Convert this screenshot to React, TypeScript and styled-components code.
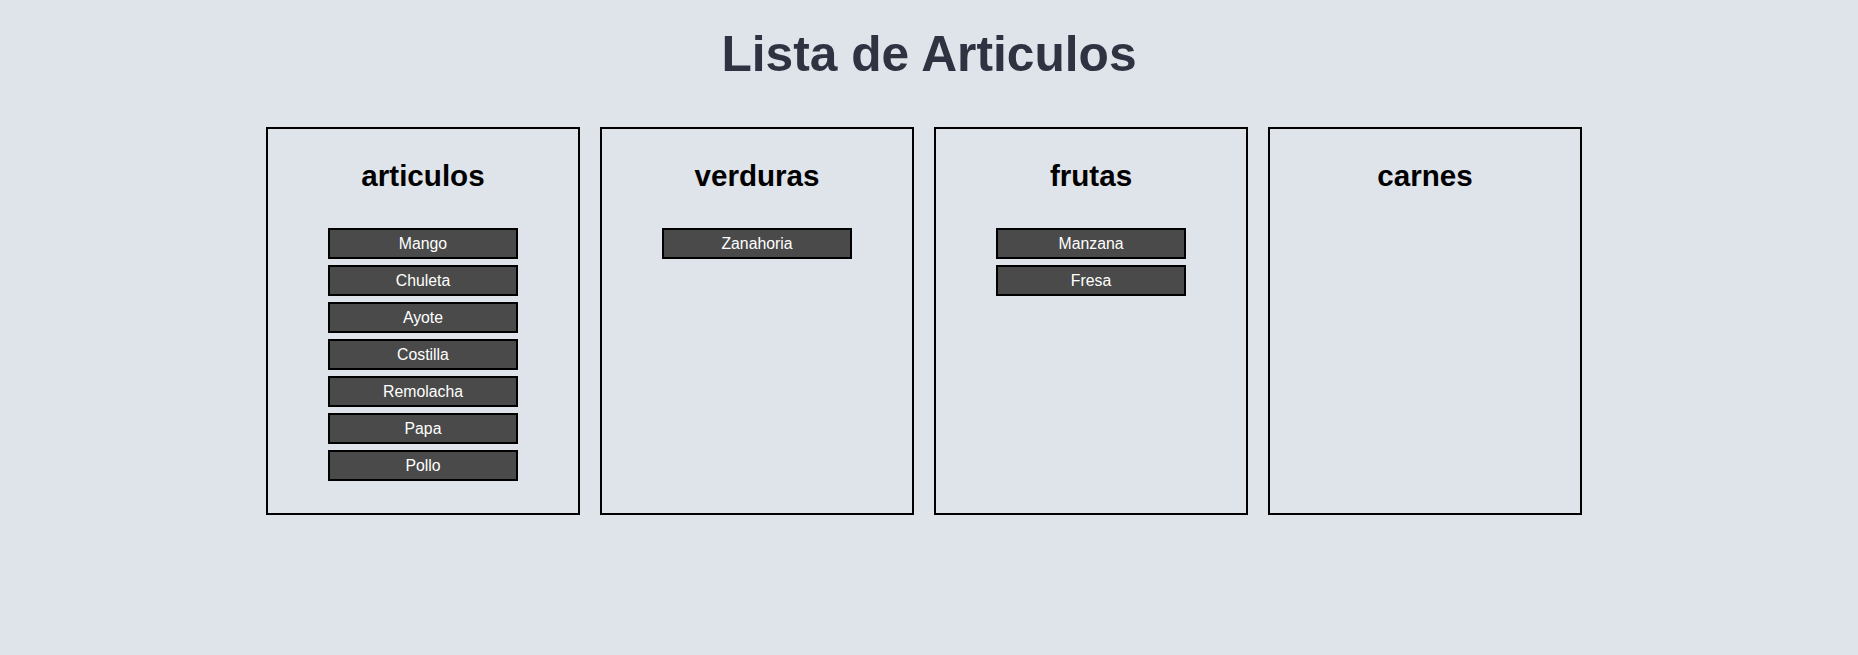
import React from "react";
import styled, { createGlobalStyle } from "styled-components";

const GlobalStyle = createGlobalStyle`
  html, body {
    margin: 0;
    padding: 0;
    background: #dfe3ea;
    font-family: "Liberation Sans", Arial, sans-serif;
  }
`;

const Page = styled.main`
  min-height: 655px;
  background: #dfe3ea;
  padding-top: 26px;
  box-sizing: border-box;
`;

const Title = styled.h1`
  margin: 0 0 45px;
  text-align: center;
  font-size: 49.7px;
  line-height: 56px;
  font-weight: 700;
  color: #2e3241;
`;

const Board = styled.section`
  display: flex;
  justify-content: center;
  align-items: stretch;
  gap: 20px;
  padding-right: 10px;
`;

const Column = styled.div`
  width: 314px;
  box-sizing: border-box;
  border: 2px solid #000;
  padding: 0 0 32px;
  display: flex;
  flex-direction: column;
  align-items: center;
`;

const ColumnTitle = styled.h2`
  margin: 30px 0 35px;
  font-size: 29.6px;
  line-height: 34px;
  font-weight: 700;
  color: #000;
`;

const ItemList = styled.div`
  display: flex;
  flex-direction: column;
  gap: 6px;
`;

const Item = styled.div`
  width: 190px;
  height: 31px;
  box-sizing: border-box;
  border: 2px solid #000;
  background: #4a4a4a;
  color: #fff;
  font-size: 15.8px;
  display: flex;
  align-items: center;
  justify-content: center;
`;

const columns: { name: string; items: string[] }[] = [
  {
    name: "articulos",
    items: ["Mango", "Chuleta", "Ayote", "Costilla", "Remolacha", "Papa", "Pollo"],
  },
  { name: "verduras", items: ["Zanahoria"] },
  { name: "frutas", items: ["Manzana", "Fresa"] },
  { name: "carnes", items: [] },
];

export default function App() {
  return (
    <>
      <GlobalStyle />
      <Page>
        <Title>Lista de Articulos</Title>
        <Board>
          {columns.map((c) => (
            <Column key={c.name}>
              <ColumnTitle>{c.name}</ColumnTitle>
              <ItemList>
                {c.items.map((it) => (
                  <Item key={it}>{it}</Item>
                ))}
              </ItemList>
            </Column>
          ))}
        </Board>
      </Page>
    </>
  );
}
